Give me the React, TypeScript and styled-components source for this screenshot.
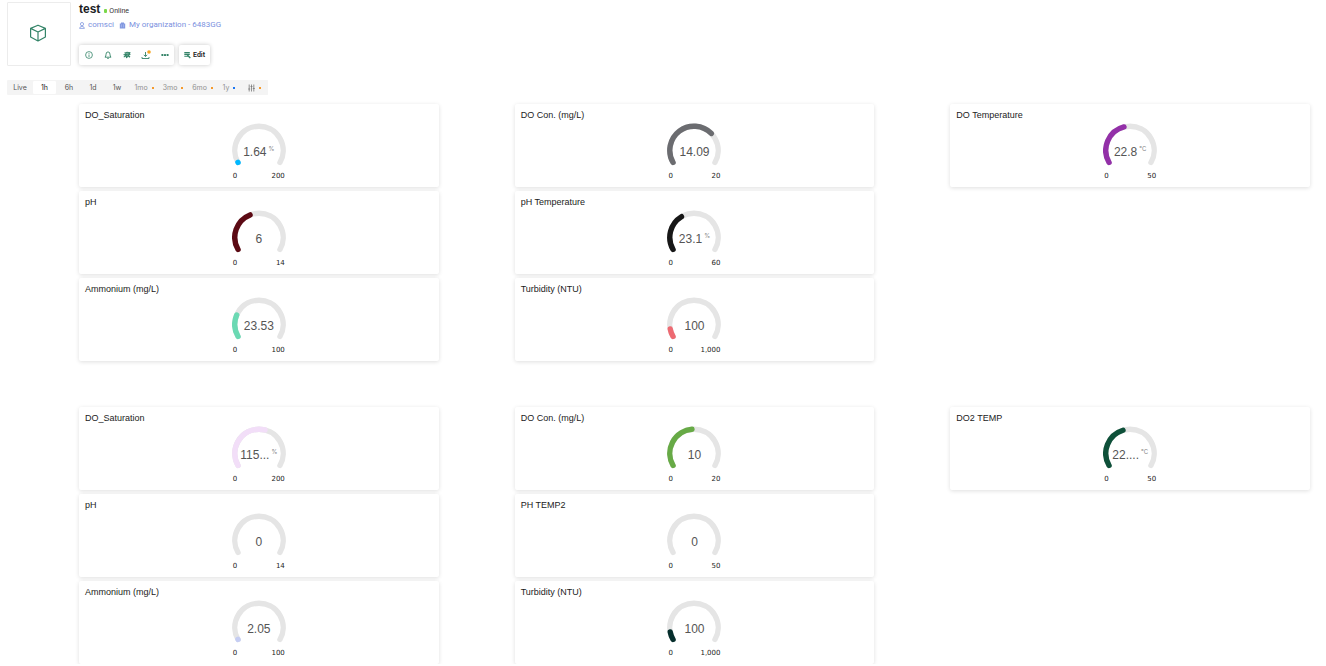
import React from "react";
import styled, { createGlobalStyle } from "styled-components";

const GlobalStyle = createGlobalStyle`
  *, *::before, *::after { box-sizing: border-box; }
  body { margin: 0; background: #fff; color: #222; font-family: "Liberation Sans", Arial, sans-serif; }
  h1, h2, p { margin: 0; }
  button { font: inherit; color: inherit; border: 0; margin: 0; padding: 0; background: none; cursor: pointer; }
  svg { display: block; }
`;

const Page = styled.div`
  padding: 2px 16px 0 7px;
`;

const Header = styled.header`
  display: flex;
  gap: 8px;
`;

const Thumb = styled.div`
  display: flex;
  align-items: center;
  justify-content: center;
  width: 64px;
  height: 64px;
  padding: 0 2px 2px 0;
  border: 1px solid #ececec;
  border-radius: 1px;
`;

const Info = styled.div`
  display: flex;
  flex-direction: column;
`;

const TitleRow = styled.div`
  display: flex;
  align-items: center;
  gap: 4px;
  height: 14px;
`;

const DeviceName = styled.h1`
  font-size: 12px;
  font-weight: 700;
  line-height: 14px;
  color: #1b1c1f;
`;

const Status = styled.span`
  display: flex;
  align-items: center;
  gap: 2px;
  padding-top: 3px;
  font: 400 7px/10px Roboto, sans-serif;
  color: #333;

  &::before {
    content: "";
    width: 3px;
    height: 4px;
    border-radius: 1px;
    background: #7ad84a;
  }
`;

const MetaRow = styled.div`
  display: flex;
  gap: 5px;
  margin-top: 4px;
`;

const MetaLink = styled.a`
  display: flex;
  align-items: center;
  gap: 3px;
  font: 400 8px/10px Roboto, sans-serif;
  color: #7a90de;
  text-decoration: none;
`;

const Actions = styled.div`
  display: flex;
  gap: 5px;
  margin-top: 15px;
`;

const ActionGroup = styled.div`
  display: flex;
  align-items: center;
  height: 20px;
  border-radius: 2px;
  background: #fff;
  box-shadow: 0 0 4px rgba(0, 0, 0, 0.22);
`;

const IconButton = styled.button`
  display: flex;
  align-items: center;
  justify-content: center;
  width: 19px;
  height: 20px;
`;

const EditButton = styled.button`
  display: flex;
  align-items: center;
  gap: 2px;
  height: 20px;
  padding: 0 5px;
  font: 600 7px/10px Roboto, sans-serif;
  color: #222;
`;

const RangeBar = styled.nav`
  display: flex;
  width: max-content;
  margin-top: 14px;
  padding: 0 0 0 1px;
  border-radius: 1px;
  background: #f4f4f4;
`;

const RangeButton = styled.button<{ $active?: boolean; $locked?: boolean; $width: number }>`
  display: flex;
  align-items: center;
  justify-content: center;
  gap: 4px;
  width: ${(p) => p.$width}px;
  height: 15px;
  border: 1px solid #f4f4f4;
  border-radius: 2px;
  background: ${(p) => (p.$active ? "#fff" : "transparent")};
  color: ${(p) => (p.$active ? "#222" : p.$locked ? "#909090" : "#555")};
  font: 400 7px/10px Inter, sans-serif;
`;

const Dot = styled.i<{ $color: string }>`
  width: 2px;
  height: 2px;
  background: ${(p) => p.$color};
`;

const Board = styled.main`
  display: flex;
  flex-direction: column;
  gap: 46px;
  margin: 9px 0 0 72px;
`;

const Section = styled.section`
  display: grid;
  grid-template-columns: repeat(3, 1fr);
  align-items: start;
  gap: 76px;
`;

const Column = styled.div`
  display: flex;
  flex-direction: column;
  gap: 4px;
`;

const Card = styled.article`
  display: flex;
  flex-direction: column;
  align-items: center;
  padding: 5px 6px 6px;
  border-radius: 2px;
  background: #fff;
  box-shadow: 0 1px 4px rgba(0, 0, 0, 0.13);
`;

const CardTitle = styled.h2`
  align-self: stretch;
  font-size: 9px;
  font-weight: 400;
  line-height: 12px;
  color: #222;
`;

const Dial = styled.div`
  display: grid;
  place-items: center;
  margin-top: 2px;

  & > * { grid-area: 1 / 1; }
`;

const Reading = styled.p`
  display: flex;
  align-items: flex-start;
  gap: 2px;
  padding-top: 11px;
  font-size: 12px;
  line-height: 16px;
  color: #555;
`;

const Unit = styled.span`
  font: 400 6px/9px Inter, sans-serif;
  color: #888;
`;

const Limits = styled.div`
  display: flex;
  justify-content: space-between;
  width: 54px;
  margin-top: 2px;
  padding: 0 1px;
  font: 400 7px/10px "DejaVu Sans", sans-serif;
  color: #222;
`;

type GaugeData = {
  title: string;
  text: string;
  unit?: string;
  max: string;
  fraction: number;
  color: string;
};

const RADIUS = 24.2;

function arc(fraction: number) {
  const point = (deg: number) => {
    const a = (deg * Math.PI) / 180;
    return `${(27 + RADIUS * Math.sin(a)).toFixed(2)} ${(27.4 - RADIUS * Math.cos(a)).toFixed(2)}`;
  };
  const sweep = 240 * fraction;
  return `M${point(-120)} A${RADIUS} ${RADIUS} 0 ${sweep > 180 ? 1 : 0} 1 ${point(-120 + sweep)}`;
}

function Gauge({ title, text, unit, max, fraction, color }: GaugeData) {
  return (
    <Card>
      <CardTitle>{title}</CardTitle>
      <Dial>
        <svg width="54" height="46" fill="none" strokeWidth="5.4" strokeLinecap="round" aria-hidden="true">
          <path d={arc(1)} stroke="#e5e5e5" />
          {fraction > 0 && <path d={arc(fraction)} stroke={color} />}
        </svg>
        <Reading>
          {text}
          {unit && <Unit>{unit}</Unit>}
        </Reading>
      </Dial>
      <Limits>
        <span>0</span>
        <span>{max}</span>
      </Limits>
    </Card>
  );
}

const sections: GaugeData[][][] = [
  [
    [
      { title: "DO_Saturation", text: "1.64", unit: "%", max: "200", fraction: 0.002, color: "#00b8ff" },
      { title: "pH", text: "6", max: "14", fraction: 0.41, color: "#5c0a14" },
      { title: "Ammonium (mg/L)", text: "23.53", max: "100", fraction: 0.22, color: "#6bd9b3" },
    ],
    [
      { title: "DO Con. (mg/L)", text: "14.09", max: "20", fraction: 0.69, color: "#6b6c70" },
      { title: "pH Temperature", text: "23.1", unit: "%", max: "60", fraction: 0.37, color: "#171717" },
      { title: "Turbidity (NTU)", text: "100", max: "1,000", fraction: 0.08, color: "#ed6a72" },
    ],
    [{ title: "DO Temperature", text: "22.8", unit: "°C", max: "50", fraction: 0.44, color: "#9330a8" }],
  ],
  [
    [
      { title: "DO_Saturation", text: "115...", unit: "%", max: "200", fraction: 0.56, color: "#f2def8" },
      { title: "pH", text: "0", max: "14", fraction: 0, color: "#e5e5e5" },
      { title: "Ammonium (mg/L)", text: "2.05", max: "100", fraction: 0.002, color: "#c5cdf3" },
    ],
    [
      { title: "DO Con. (mg/L)", text: "10", max: "20", fraction: 0.48, color: "#67aa46" },
      { title: "PH TEMP2", text: "0", max: "50", fraction: 0, color: "#e5e5e5" },
      { title: "Turbidity (NTU)", text: "100", max: "1,000", fraction: 0.08, color: "#062e2c" },
    ],
    [{ title: "DO2 TEMP", text: "22....", unit: "°C", max: "50", fraction: 0.43, color: "#0e5039" }],
  ],
];

const ORANGE = "#f59a2c";
const ranges: { label: string; width: number; dot?: string }[] = [
  { label: "Live", width: 24 },
  { label: "1h", width: 25 },
  { label: "6h", width: 24 },
  { label: "1d", width: 24 },
  { label: "1w", width: 24 },
  { label: "1mo", width: 30, dot: ORANGE },
  { label: "3mo", width: 28, dot: ORANGE },
  { label: "6mo", width: 31, dot: ORANGE },
  { label: "1y", width: 22, dot: "#1b76f2" },
];

const GREEN = "#348468";

const CubeIcon = () => (
  <svg width="18" height="18" viewBox="0 0 18 18" fill="none" stroke={GREEN} strokeWidth="1.2" strokeLinejoin="round">
    <path d="M9 1.2 16.4 4.4V13L9 17 1.6 13V4.4Z M1.6 4.4 9 8 16.4 4.4 M9 8V17" />
  </svg>
);

const InfoIcon = () => (
  <svg width="8" height="8" viewBox="0 0 8 8" fill="none" stroke={GREEN} strokeWidth="0.8">
    <circle cx="4" cy="4" r="3.4" />
    <path d="M4 3.5V6M4 2V2.8" />
  </svg>
);

const BellIcon = () => (
  <svg width="8" height="8" viewBox="0 0 8 8" fill="none" stroke={GREEN} strokeWidth="0.9" strokeLinejoin="round">
    <path d="M1 6.2Q2 5.2 2 3.4Q2 .9 4 .9Q6 .9 6 3.4Q6 5.2 7 6.2ZM3.2 7.4H4.8" />
  </svg>
);

const SatelliteIcon = () => (
  <svg width="8" height="8" viewBox="0 0 8 8" fill={GREEN}>
    <path d="M1 1.8 4 .8 7.7 1.2 7 2.6 7.8 3.4 6 4.2 7.4 5.4 6.4 6.8 5 5.4 4.2 7 3 7.2 2.8 5.5 1 6.6.5 5.8 2 4.4.3 4 .6 3.2 2.4 3Z" />
    <path d="M2.6 2.4 5.6 2.2M3.6 4.6 5.2 3.8" stroke="#c7e0d6" strokeWidth="0.5" />
  </svg>
);

const DownloadIcon = () => (
  <svg width="10" height="10" viewBox="0 0 10 10" fill="none" stroke={GREEN} strokeWidth="0.9">
    <path d="M4.5 2V6.4M2.8 4.8 4.5 6.6 6.2 4.8M1 7V8.5H8V7" />
    <circle cx="8" cy="2" r="1.8" fill="#f5a623" stroke="none" />
  </svg>
);

const MoreIcon = () => (
  <svg width="8" height="8" viewBox="0 0 8 8" fill={GREEN}>
    <rect x="0.4" y="3" width="2" height="2" rx="0.6" />
    <rect x="3" y="3" width="2" height="2" rx="0.6" />
    <rect x="5.6" y="3" width="2" height="2" rx="0.6" />
  </svg>
);

const EditIcon = () => (
  <svg width="7" height="8" viewBox="0 0 7 8" fill="none" stroke={GREEN}>
    <path d="M.3 1.6H5.8M.3 3.4H5.8M.3 5.2H4" strokeWidth="1.1" />
    <path d="M3.4 4 6.3 7" strokeWidth="1.4" />
  </svg>
);

const UserIcon = () => (
  <svg width="6" height="7" viewBox="0 0 6 7" fill="none" stroke="#8298e0" strokeWidth="0.8">
    <circle cx="3" cy="2.1" r="1.6" />
    <path d="M.6 6.4Q.8 4.4 3 4.4Q5.2 4.4 5.4 6.4Z" />
  </svg>
);

const BuildingIcon = () => (
  <svg width="7" height="7" viewBox="0 0 7 7" fill="#8298e0">
    <path d="M2 .4H5V1.4H6.2V6.6H.8V1.4H2Z" />
    <path d="M2.4 2.4V5.4M4.6 2.4V5.4" stroke="#c3cef3" strokeWidth="0.5" />
  </svg>
);

const SlidersIcon = () => (
  <svg width="7" height="8" viewBox="0 0 7 8" fill="none" stroke="#777" strokeWidth="0.8">
    <path d="M1.2.5V7.5M3.5.5V7.5M5.8.5V7.5M.2 5H2.2M2.5 2.5H4.5M4.8 4.5H6.8" />
  </svg>
);

export default function App() {
  return (
    <>
      <GlobalStyle />
      <Page>
        <Header>
          <Thumb>
            <CubeIcon />
          </Thumb>
          <Info>
            <TitleRow>
              <DeviceName>test</DeviceName>
              <Status>Online</Status>
            </TitleRow>
            <MetaRow>
              <MetaLink href="#user">
                <UserIcon />
                comsci
              </MetaLink>
              <MetaLink href="#organization">
                <BuildingIcon />
                My organization - 6483GG
              </MetaLink>
            </MetaRow>
            <Actions>
              <ActionGroup>
                <IconButton aria-label="Info"><InfoIcon /></IconButton>
                <IconButton aria-label="Alerts"><BellIcon /></IconButton>
                <IconButton aria-label="Connection"><SatelliteIcon /></IconButton>
                <IconButton aria-label="Download"><DownloadIcon /></IconButton>
                <IconButton aria-label="More"><MoreIcon /></IconButton>
              </ActionGroup>
              <ActionGroup>
                <EditButton>
                  <EditIcon />
                  Edit
                </EditButton>
              </ActionGroup>
            </Actions>
          </Info>
        </Header>
        <RangeBar aria-label="Time range">
          {ranges.map((r) => (
            <RangeButton key={r.label} $width={r.width} $active={r.label === "1h"} $locked={!!r.dot}>
              {r.label}
              {r.dot && <Dot $color={r.dot} />}
            </RangeButton>
          ))}
          <RangeButton $width={28} $locked aria-label="Custom range">
            <SlidersIcon />
            <Dot $color={ORANGE} />
          </RangeButton>
        </RangeBar>
        <Board>
          {sections.map((columns, s) => (
            <Section key={s}>
              {columns.map((gauges, c) => (
                <Column key={c}>
                  {gauges.map((g) => (
                    <Gauge key={g.title} {...g} />
                  ))}
                </Column>
              ))}
            </Section>
          ))}
        </Board>
      </Page>
    </>
  );
}
